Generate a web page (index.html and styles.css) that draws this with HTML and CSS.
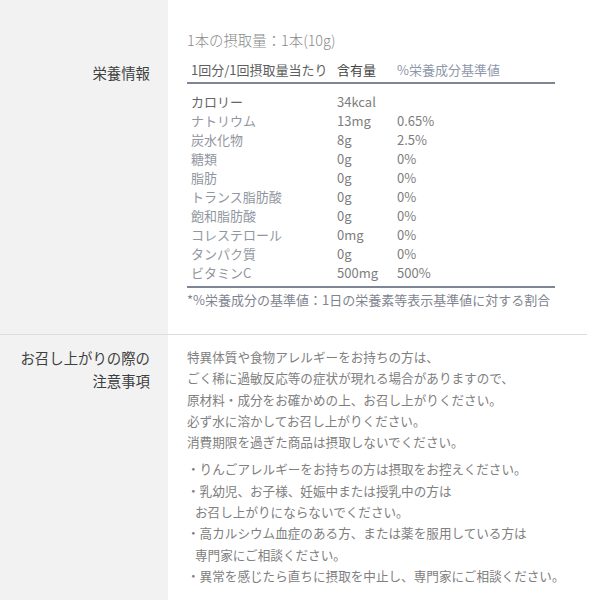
FILE: index.html
```html
<!DOCTYPE html>
<html lang="ja">
<head>
<meta charset="utf-8">
<title>栄養情報</title>
<link rel="stylesheet" href="styles.css">
</head>
<body>
<div class="sheet">
  <section class="row row-nutri">
    <div class="label label-nutri">栄養情報</div>
    <div class="content">
      <p class="serving">1本の摂取量：1本(10g)</p>
      <table class="nutri">
        <colgroup><col class="c1"><col class="c2"><col class="c3"></colgroup>
        <thead>
          <tr><th class="h1">1回分/1回摂取量当たり</th><th class="h2">含有量</th><th class="h3">%栄養成分基準値</th></tr>
        </thead>
        <tbody>
          <tr class="first"><td class="name dark">カロリー</td><td>34kcal</td><td></td></tr>
          <tr><td class="name">ナトリウム</td><td>13mg</td><td>0.65%</td></tr>
          <tr><td class="name">炭水化物</td><td>8g</td><td>2.5%</td></tr>
          <tr><td class="name">糖類</td><td>0g</td><td>0%</td></tr>
          <tr><td class="name">脂肪</td><td>0g</td><td>0%</td></tr>
          <tr><td class="name">トランス脂肪酸</td><td>0g</td><td>0%</td></tr>
          <tr><td class="name">飽和脂肪酸</td><td>0g</td><td>0%</td></tr>
          <tr><td class="name">コレステロール</td><td>0mg</td><td>0%</td></tr>
          <tr><td class="name">タンパク質</td><td>0g</td><td>0%</td></tr>
          <tr class="last"><td class="name">ビタミンC</td><td>500mg</td><td>500%</td></tr>
        </tbody>
      </table>
      <p class="footnote">*%栄養成分の基準値：1日の栄養素等表示基準値に対する割合</p>
    </div>
  </section>
  <section class="row row-notes">
    <div class="label label-notes">お召し上がりの際の<br>注意事項</div>
    <div class="content notes">
      <p class="block">特異体質や食物アレルギーをお持ちの方は、<br>ごく稀に過敏反応等の症状が現れる場合がありますので、<br>原材料・成分をお確かめの上、お召し上がりください。<br>必ず水に溶かしてお召し上がりください。<br>消費期限を過ぎた商品は摂取しないでください。</p>
      <ul class="bullets">
        <li>・りんごアレルギーをお持ちの方は摂取をお控えください。</li>
        <li>・乳幼児、お子様、妊娠中または授乳中の方は<br><span class="cont">お召し上がりにならないでください。</span></li>
        <li>・高カルシウム血症のある方、または薬を服用している方は<br><span class="cont">専門家にご相談ください。</span></li>
        <li>・異常を感じたら直ちに摂取を中止し、専門家にご相談ください。</li>
      </ul>
    </div>
  </section>
</div>
</body>
</html>
```
FILE: styles.css
```css
html, body {
  margin: 0;
  padding: 0;
  background: #ffffff;
}
body {
  font-family: "Noto Sans CJK JP", "Noto Sans", sans-serif;
  color: #888888;
}
.sheet {
  width: 587px;
}
.row {
  display: grid;
  grid-template-columns: 168px 1fr;
}
.row-nutri {
  border-bottom: 1px solid #dcdcdc;
}
.label {
  background: #f2f2f2;
  text-align: right;
  padding-right: 18px;
  font-size: 14.4px;
  font-weight: normal;
  color: #3f3f3f;
}
.label-nutri {
  padding-top: 63px;
  line-height: 20px;
}
.label-notes {
  padding-top: 11px;
  line-height: 23px;
}
.content {
  padding-left: 19px;
}
.row-nutri .content {
  padding-top: 30px;
  padding-bottom: 24px;
}
.serving {
  margin: 0 0 10px 0;
  font-size: 14.4px;
  font-weight: 300;
  line-height: 20px;
  color: #8a8a8a;
}
.nutri {
  width: 368px;
  border-collapse: collapse;
  table-layout: fixed;
  font-size: 13px;
}
.nutri .c1 { width: 146px; }
.nutri .c2 { width: 60px; }
.nutri th {
  text-align: left;
  font-weight: normal;
  line-height: 20px;
  padding: 0 0 2px 4px;
  border-bottom: 2px solid #7e8695;
  white-space: nowrap;
}
.nutri .h1 { color: #5e5e5e; }
.nutri .h2 { color: #444444; }
.nutri .h3 { color: #8f97aa; }
.nutri td {
  line-height: 19px;
  padding: 0 0 0 4px;
  color: #7d7d7d;
  white-space: nowrap;
}
.nutri .first td { padding-top: 8px; }
.nutri .last td {
  padding-bottom: 4px;
  border-bottom: 2px solid #7e8695;
}
.nutri td.name { color: #92979f; }
.nutri td.dark { color: #666666; }
.footnote {
  margin: 2px 0 0 0;
  font-size: 13px;
  line-height: 20px;
  color: #7f8590;
  white-space: nowrap;
}
.notes {
  padding-top: 11px;
  padding-bottom: 14px;
  font-size: 12.6px;
  line-height: 21.3px;
  color: #808080;
  white-space: nowrap;
}
.block {
  margin: 0;
}
.bullets {
  list-style: none;
  margin: 6px 0 0 0;
  padding: 0;
}
.bullets li {
  margin: 0;
}
.cont {
  padding-left: 8px;
}
```
